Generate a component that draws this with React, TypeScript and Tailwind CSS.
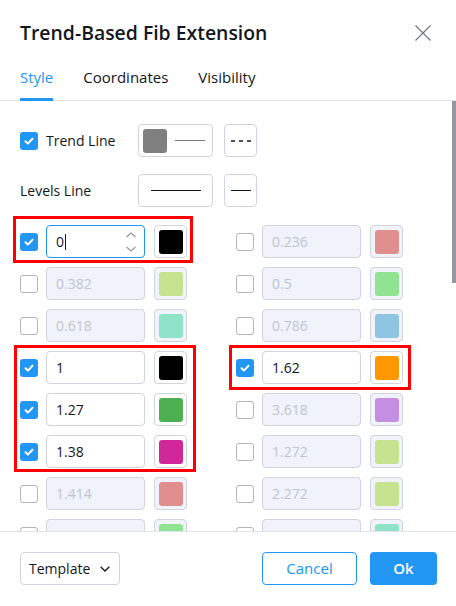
import React from 'react';
import clsx from 'clsx';

type Level = { value: string; color: string; on?: boolean; focused?: boolean };

const leftLevels: Level[] = [
  { value: '0', color: '#000000', on: true, focused: true },
  { value: '0.382', color: '#c6e390' },
  { value: '0.618', color: '#8ee3c8' },
  { value: '1', color: '#000000', on: true },
  { value: '1.27', color: '#4caf50', on: true },
  { value: '1.38', color: '#d0289a', on: true },
  { value: '1.414', color: '#e08e8e' },
  { value: '2.618', color: '#90e390' },
];

const rightLevels: Level[] = [
  { value: '0.236', color: '#e08e8e' },
  { value: '0.5', color: '#90e390' },
  { value: '0.786', color: '#8fc5e3' },
  { value: '1.62', color: '#ff9800', on: true },
  { value: '3.618', color: '#c48fe3' },
  { value: '1.272', color: '#c6e390' },
  { value: '2.272', color: '#c6e390' },
  { value: '4.236', color: '#8ee3c8' },
];

const Checkbox = ({ on }: { on?: boolean }) =>
  on ? (
    <span className="flex h-[18px] w-[18px] shrink-0 items-center justify-center rounded-[3px] bg-[#2196f3]">
      <svg width="18" height="18" viewBox="0 0 18 18">
        <path d="M5.5 9.3 7.9 11.6 12.5 6.8" fill="none" stroke="#fff" strokeWidth="2" strokeLinecap="round" strokeLinejoin="round" />
      </svg>
    </span>
  ) : (
    <span className="h-[18px] w-[18px] shrink-0 rounded-[3px] border border-[#b2b5be] bg-white" />
  );

const LevelCell = ({ level }: { level: Level }) => (
  <div className="flex items-center">
    <Checkbox on={level.on} />
    <div
      className={clsx(
        'ml-[8px] flex h-[33px] w-[99px] items-center rounded-[4px] border pl-[9px] pr-[7px] text-[14px]',
        level.focused
          ? 'border-[#2196f3] bg-white text-[#131722]'
          : level.on
            ? 'border-[#d1d4dc] bg-white text-[#131722]'
            : 'border-[#d1d4dc] bg-[#f0f3fa] text-[#c1c4cd]',
      )}
    >
      <span>{level.value}</span>
      {level.focused && (
        <>
          <span className="ml-[1px] h-[16px] w-px bg-[#131722]" />
          <svg className="ml-auto" width="12" height="22" viewBox="0 0 12 22">
            <path d="M1.5 6 6 2 10.5 6M1.5 16 6 20 10.5 16" fill="none" stroke="#9598a1" strokeWidth="1.2" />
          </svg>
        </>
      )}
    </div>
    <div
      className={clsx(
        'ml-[9px] flex h-[33px] w-[33px] items-center justify-center rounded-[4px] border border-[#d1d4dc]',
        level.on ? 'bg-white' : 'bg-[#f0f3fa]',
      )}
    >
      <span className="h-[24px] w-[24px] rounded-[3px]" style={{ backgroundColor: level.color }} />
    </div>
  </div>
);

const App = () => (
  <div className="relative h-[606px] w-[456px] overflow-hidden bg-white font-['Open_Sans',sans-serif] text-[#131722]">
    <div className="flex items-center justify-between pl-5 pr-[25px] pt-[19px]">
      <h2 className="text-[19.4px] font-semibold leading-[28px]">Trend-Based Fib Extension</h2>
      <svg width="16" height="16" viewBox="0 0 16 16">
        <path d="M0.5 0.5 15.5 15.5M15.5 0.5 0.5 15.5" stroke="#787b86" strokeWidth="1.3" />
      </svg>
    </div>

    <div className="mt-[16px] flex h-[38px] gap-[30px] border-b border-[#e0e3eb] px-5 text-[15px] leading-[20px]">
      <span className="-mb-px border-b-[3px] border-[#2196f3] pt-[4px] text-[#2196f3]">Style</span>
      <span className="pt-[4px]">Coordinates</span>
      <span className="pt-[4px]">Visibility</span>
    </div>

    <div className="h-[430px] overflow-hidden px-5 pt-[23px] text-[14px]">
      <div className="flex h-[33px] items-center">
        <div className="flex w-[118px] items-center gap-[8px]">
          <Checkbox on />
          <span>Trend Line</span>
        </div>
        <div className="flex h-[33px] w-[75px] items-center rounded-[4px] border border-[#d1d4dc] pl-[4px]">
          <span className="h-[24px] w-[24px] rounded-[3px] bg-[#808080]" />
          <span className="ml-[8px] h-px w-[30px] bg-[#787b86]" />
        </div>
        <div className="ml-[11px] flex h-[33px] w-[33px] items-center justify-center rounded-[4px] border border-[#d1d4dc]">
          <svg width="20" height="2" viewBox="0 0 20 2">
            <path d="M0 1H20" stroke="#131722" strokeWidth="1.3" strokeDasharray="4 4" />
          </svg>
        </div>
      </div>

      <div className="mt-[17px] flex h-[33px] items-center">
        <span className="w-[118px]">Levels Line</span>
        <div className="flex h-[33px] w-[75px] items-center justify-center rounded-[4px] border border-[#d1d4dc]">
          <span className="h-[1.5px] w-[50px] bg-[#131722]" />
        </div>
        <div className="ml-[11px] flex h-[33px] w-[33px] items-center justify-center rounded-[4px] border border-[#d1d4dc]">
          <span className="h-[1.5px] w-[20px] bg-[#131722]" />
        </div>
      </div>

      <div className="mt-[18px] grid grid-cols-[216px_1fr] gap-y-[9px]">
        {leftLevels.map((level, i) => (
          <React.Fragment key={level.value + i}>
            <LevelCell level={level} />
            <LevelCell level={rightLevels[i]} />
          </React.Fragment>
        ))}
      </div>
    </div>

    <div className="flex items-start border-t border-[#e0e3eb] pl-5 pr-[19px] pt-[20px]">
      <div className="flex h-[33px] w-[100px] items-center rounded-[4px] border border-[#d1d4dc] pl-[8px] text-[14px]">
        <span>Template</span>
        <svg className="ml-auto mr-[9px]" width="10" height="6" viewBox="0 0 10 6">
          <path d="M0.7 0.7 5 5 9.3 0.7" fill="none" stroke="#131722" strokeWidth="1.3" />
        </svg>
      </div>
      <button className="ml-auto h-[33px] w-[95px] rounded-[4px] border border-[#2196f3] text-[15px] text-[#2196f3]">
        Cancel
      </button>
      <button className="ml-[13px] h-[33px] w-[67px] rounded-[4px] bg-[#2196f3] text-[15px] font-semibold text-white">
        Ok
      </button>
    </div>

    {/* scrollbar thumb */}
    <span className="absolute right-0 top-[101px] h-[182px] w-[4px] bg-[#9598a1]" />

    {/* highlighted levels */}
    <span className="pointer-events-none absolute left-[13px] top-[216px] h-[47px] w-[180px] border-[3px] border-[#ff0000]" />
    <span className="pointer-events-none absolute left-[14px] top-[345px] h-[127px] w-[182px] border-[3px] border-[#ff0000]" />
    <span className="pointer-events-none absolute left-[229px] top-[345px] h-[45px] w-[182px] border-[3px] border-[#ff0000]" />
  </div>
);

export default App;
